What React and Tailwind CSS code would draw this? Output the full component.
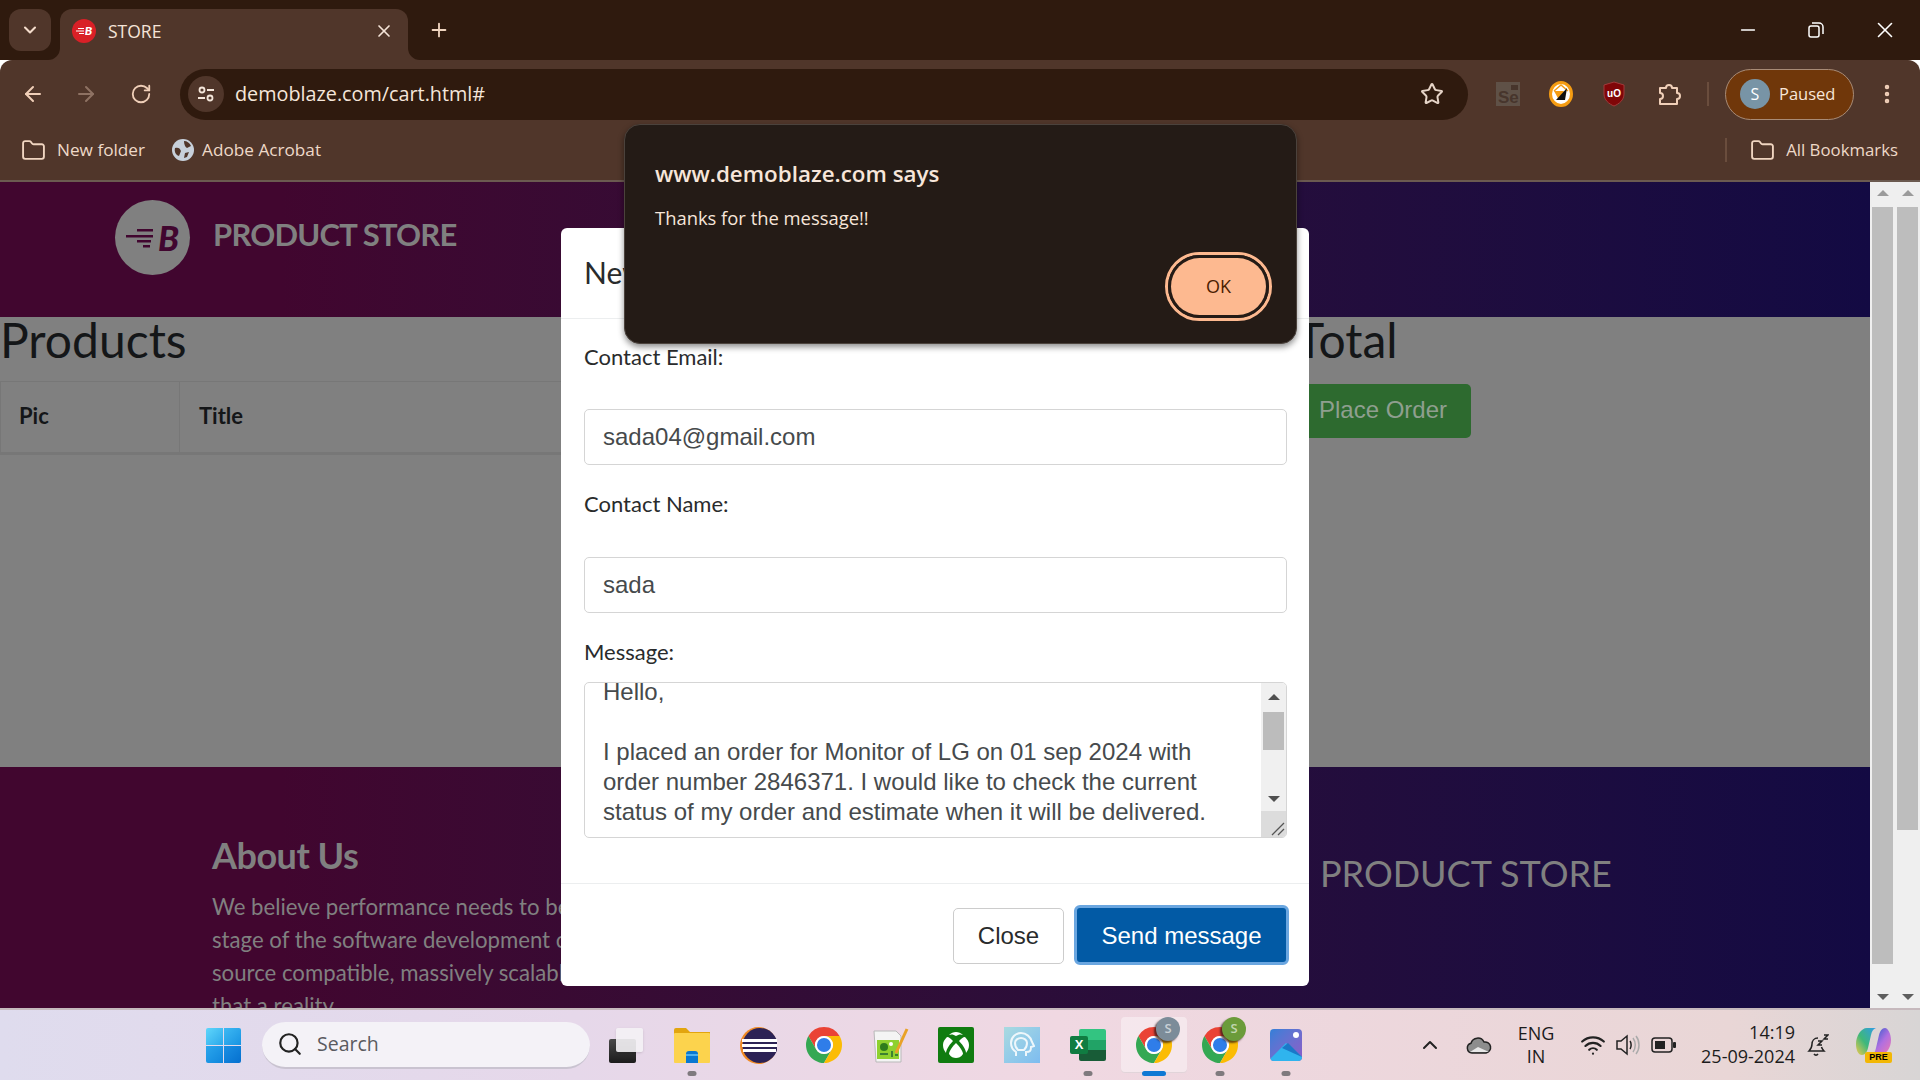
import {
  ArrowLeft,
  ArrowRight,
  RotateCw,
  Star,
  X,
  Plus,
  ChevronDown,
  ChevronUp,
  Minus,
  Search,
  Folder,
  EllipsisVertical,
  Wifi,
} from "lucide-react";

function ChromeIcon({ size = 36 }) {
  return (
    <svg width={size} height={size} viewBox="2 2 44 44">
      <path fill="#EA4335" d="M24 2A22 22 0 0 1 43.05 13H24A11 11 0 0 0 14.47 29.5L4.95 13A22 22 0 0 1 24 2z" />
      <path fill="#34A853" d="M4.95 13L14.47 29.5A11 11 0 0 0 33.53 29.5L24 46A22 22 0 0 1 4.95 13z" />
      <path fill="#FBBC04" d="M43.05 13H24A11 11 0 0 1 33.53 29.5L24 46A22 22 0 0 0 43.05 13z" />
      <circle cx="24" cy="24" r="11" fill="#fff" />
      <circle cx="24" cy="24" r="8.6" fill="#2f7de9" />
    </svg>
  );
}

function WindowsIcon() {
  return (
    <div className="grid h-[35px] w-[35px] grid-cols-2 gap-[1px]">
      <div className="rounded-tl-[2px] bg-gradient-to-br from-[#5fd6fb] to-[#28a8ea]" />
      <div className="rounded-tr-[2px] bg-gradient-to-br from-[#3db9f3] to-[#1793e2]" />
      <div className="rounded-bl-[2px] bg-gradient-to-br from-[#2aa6ec] to-[#0f86dc]" />
      <div className="rounded-br-[2px] bg-gradient-to-br from-[#1a8fe3] to-[#0670cf]" />
    </div>
  );
}

function TaskView() {
  return (
    <div className="relative h-[35px] w-[34px]">
      <div className="absolute bottom-0 left-0 h-[24px] w-[27px] rounded-[2px] bg-gradient-to-b from-[#4a4a4a] to-[#1c1c1c]" />
      <div className="absolute right-0 top-0 h-[24px] w-[27px] rounded-[2px] bg-[#f4f2f5]/90 shadow-sm" />
    </div>
  );
}

function ExplorerIcon() {
  return (
    <svg width="36" height="35" viewBox="0 0 36 35">
      <path fill="#e2a50e" d="M0 2a2 2 0 0 1 2-2h10l4 4h20v8H0z" />
      <rect y="5" width="36" height="30" rx="1" fill="#fcd34d" />
      <path fill="#0a78d1" d="M12 35V26a3 3 0 0 1 3-3h6a3 3 0 0 1 3 3v9z" />
      <rect x="12" y="26" width="12" height="2" fill="#4fb1ee" />
    </svg>
  );
}

function EclipseIcon() {
  return (
    <svg width="37" height="37" viewBox="0 0 37 37">
      <circle cx="18.5" cy="18.5" r="18.5" fill="#f08a24" />
      <circle cx="20" cy="18.5" r="17.5" fill="#2c2255" />
      <rect x="2" y="12" width="35" height="3" fill="#fff" />
      <rect x="2" y="17" width="35" height="3" fill="#fff" />
      <rect x="3" y="22" width="33" height="3" fill="#fff" />
    </svg>
  );
}

function NotepadIcon() {
  return (
    <svg width="37" height="37" viewBox="0 0 37 37">
      <path fill="#f4f4f4" stroke="#b9b9b9" d="M2 4h22l5 5v26H4z" />
      <rect x="5" y="13" width="22" height="19" fill="#8fd12f" />
      <circle cx="12" cy="20" r="4" fill="#2f7d1c" />
      <circle cx="19" cy="17" r="2" fill="#fff" />
      <path stroke="#263" strokeWidth="1.5" d="M8 27h8M20 24v6M23 28h3" fill="none" />
      <path stroke="#e9a227" strokeWidth="3" d="M24 26L35 2" />
    </svg>
  );
}

function XboxIcon() {
  return (
    <div className="flex h-[36px] w-[36px] items-center justify-center rounded-[2px] bg-[#107c10]">
      <svg width="28" height="28" viewBox="0 0 28 28" fill="#fff">
        <path d="M14 5c2-1.500 5-2 7-1-2-1.800-4.500-3-7-3s-5 1.200-7 3c2-1 5-.5 7 1z" />
        <path d="M5 6C2.500 8.500 1 11 1 14c0 3 1 5.500 3 8 0-4 5-10 7-12-2-2-4-4-6-4z" />
        <path d="M23 6c2.500 2.500 4 5 4 8 0 3-1 5.500-3 8 0-4-5-10-7-12 2-2 4-4 6-4z" />
        <path d="M14 12c-3 3-7 8-7 11 2 3 4.500 4 7 4s5-1 7-4c0-3-4-8-7-11z" />
      </svg>
    </div>
  );
}

function LightIcon() {
  return (
    <div className="flex h-[36px] w-[36px] items-center justify-center bg-gradient-to-br from-[#a9dae0] to-[#7dbcf0]">
      <svg width="26" height="28" viewBox="0 0 26 28" fill="none" stroke="#eef7fb" strokeWidth="2">
        <path d="M7 25v-4c-3-2-5-5-5-9C2 6 7 2 12 2s10 4 11 9l2 4-3 1c0 4-1 5-5 5v4" />
        <path d="M9 19c-2-2-3-4-3-7 0-3 3-5 6-5s6 2 6 5c0 3-1 5-3 7z" />
      </svg>
    </div>
  );
}

function ExcelIcon() {
  return (
    <div className="relative h-[32px] w-[36px]">
      <div className="absolute right-0 top-0 grid h-[32px] w-[27px] grid-rows-3 overflow-hidden rounded-[2px]">
        <div className="bg-[#33c481]" />
        <div className="bg-[#21a366]" />
        <div className="bg-[#185c37]" />
      </div>
      <div className="absolute left-0 top-[7px] flex h-[18px] w-[18px] items-center justify-center rounded-[2px] bg-[#107c41] font-['Liberation_Sans',sans-serif] text-[13px] font-bold text-white">
        X
      </div>
    </div>
  );
}

function PhotosIcon() {
  return (
    <div className="relative h-[32px] w-[32px] overflow-hidden rounded-[4px] bg-gradient-to-br from-[#2f7fd8] to-[#8a5cc7]">
      <div className="absolute right-[3px] top-[3px] h-[6px] w-[6px] rounded-full bg-white" />
      <svg className="absolute inset-0" width="32" height="32" viewBox="0 0 32 32">
        <path fill="#2fb4ee" d="M0 30L16 14l16 14v4H0z" />
        <path fill="#1a78c8" d="M12 19l6-5 14 14-9-4z" />
      </svg>
    </div>
  );
}

function CopilotIcon() {
  return (
    <div className="relative h-[36px] w-[36px]">
      <svg className="absolute left-0 top-0" width="35" height="29" viewBox="0 0 35 29">
        <defs>
          <linearGradient id="copLeft" x1="0" y1="1" x2="1" y2="0">
            <stop offset="0" stopColor="#f2c94c" />
            <stop offset="0.45" stopColor="#3fb87a" />
            <stop offset="1" stopColor="#2f9be8" />
          </linearGradient>
          <linearGradient id="copRight" x1="0" y1="0" x2="1" y2="1">
            <stop offset="0" stopColor="#1557c8" />
            <stop offset="0.55" stopColor="#b06fe0" />
            <stop offset="1" stopColor="#f07ab0" />
          </linearGradient>
        </defs>
        <path fill="url(#copLeft)" d="M11 1h9c-3 1-4 3-5 7l-3 13c-1 4-3 7-6 7-4 0-6-5-6-11C0 9 5 1 11 1z" />
        <path fill="url(#copRight)" d="M24 28h-9c3-1 4-3 5-7l3-13c1-4 3-7 6-7 3 0 6 6 6 12 0 8-5 15-11 15z" />
      </svg>
      <div className="absolute bottom-0 right-0 flex h-[11px] w-[27px] items-center justify-center rounded-[2px] bg-[#f2b705] font-['Liberation_Sans',sans-serif] text-[9px] font-bold leading-none text-black">
        PRE
      </div>
    </div>
  );
}

function ProfileChrome({ color }) {
  return (
    <div className="relative h-[36px] w-[36px]">
      <ChromeIcon />
      <div
        className="absolute -right-[8px] -top-[10px] flex h-[24px] w-[24px] items-center justify-center rounded-full font-['Open_Sans',sans-serif] text-[13px] font-semibold text-white/60 shadow-[-2px_2px_2px_rgba(40,20,20,0.7)]"
        style={{ backgroundColor: color }}
      >
        S
      </div>
    </div>
  );
}

function TaskSlot({ children, mark, active }) {
  return (
    <div
      className={`relative flex h-[56px] w-[66px] items-center justify-center ${
        active ? "rounded-[4px] bg-white/40 shadow-[inset_0_-1px_0_rgba(0,0,0,0.08)]" : ""
      }`}
    >
      {children}
      {mark && (
        <div
          className={`absolute bottom-[-3px] left-1/2 h-[5px] -translate-x-1/2 rounded-full ${
            active ? "w-[24px] bg-[#0f78d4]" : "w-[9px] bg-[#7f7a7e]"
          }`}
        />
      )}
    </div>
  );
}

function Taskbar() {
  return (
    <div className="flex h-[72px] items-center border-t-2 border-[#c6b9bd] bg-[linear-gradient(90deg,#dfdcee_0%,#e6d8ea_30%,#f0d8e2_55%,#e9d6d6_90%,#d8d5d5_100%)] pl-[206px] font-['Open_Sans',sans-serif] text-[#1c1c1c]">
      <WindowsIcon />
      <div className="ml-[21px] flex h-[47px] w-[328px] items-center rounded-full border-b-2 border-[#c9c3d0] bg-[#f4f2f7] pl-[15px]">
        <Search size={26} strokeWidth={2} color="#222" />
        <span className="ml-[14px] text-[19.5px] text-[#5a5a5f]">Search</span>
      </div>
      <div className="ml-[3px] flex items-center">
        <TaskSlot><TaskView /></TaskSlot>
        <TaskSlot mark><ExplorerIcon /></TaskSlot>
        <TaskSlot><EclipseIcon /></TaskSlot>
        <TaskSlot><ChromeIcon /></TaskSlot>
        <TaskSlot><NotepadIcon /></TaskSlot>
        <TaskSlot><XboxIcon /></TaskSlot>
        <TaskSlot><LightIcon /></TaskSlot>
        <TaskSlot mark><ExcelIcon /></TaskSlot>
        <TaskSlot mark active><ProfileChrome color="#7c8c99" /></TaskSlot>
        <TaskSlot mark><ProfileChrome color="#6b9b3a" /></TaskSlot>
        <TaskSlot mark><PhotosIcon /></TaskSlot>
      </div>

      {/* tray */}
      <div className="ml-[99px] flex items-center">
        <ChevronUp size={24} strokeWidth={2} color="#222" />
        <svg className="ml-[24px]" width="26" height="18" viewBox="0 0 26 18">
          <path fill="#8d8d8d" stroke="#222" strokeWidth="1.5" d="M6 17a5 5 0 0 1-1-9.800A7 7 0 0 1 18 6a5.500 5.500 0 0 1 2 11z" />
          <path fill="#e8e8e8" d="M4 16l8-5 11 5z" />
        </svg>
        <div className="ml-[11px] flex w-[66px] flex-col items-center text-[18px] leading-[23px]">
          <span>ENG</span>
          <span>IN</span>
        </div>
        <Wifi className="ml-[11px]" size={26} strokeWidth={2} color="#222" />
        <svg className="ml-[9px]" width="26" height="24" viewBox="0 0 26 24" fill="none" stroke="#222" strokeWidth="1.5">
          <path d="M2 8h4l6-5v18l-6-5H2z" />
          <path d="M15 8c1.500 2 1.500 6 0 8" />
          <path stroke="#aaa" d="M18 5c3 4 3 10 0 14M21 3c4 5 4 13 0 18" />
        </svg>
        <svg className="ml-[10px]" width="26" height="18" viewBox="0 0 26 18">
          <rect x="1" y="2" width="20" height="14" rx="3" fill="none" stroke="#222" strokeWidth="1.500" />
          <rect x="4" y="5" width="10" height="8" fill="#222" />
          <rect x="22" y="6" width="3" height="6" rx="1" fill="#222" />
        </svg>
        <div className="ml-[15px] flex w-[103px] flex-col items-end pb-[3px] text-[18px] leading-[24px]">
          <span>14:19</span>
          <span className="whitespace-nowrap">25-09-2024</span>
        </div>
        <svg className="ml-[12px]" width="22" height="24" viewBox="0 0 22 24" fill="none" stroke="#222" strokeWidth="1.500">
          <path d="M11 5C7 5 5 8 5 11c0 3-1 5-3 7h15c-1-1-2-2-2.500-4" />
          <path d="M7 21c1 1.500 3 1.500 4 0" />
          <path d="M11 8h4l-4 4h4M17 2h4l-4 4h4" />
        </svg>
        <div className="ml-[27px]">
          <CopilotIcon />
        </div>
      </div>
    </div>
  );
}

function BrowserChrome() {
  return (
    <>
      {/* tab strip */}
      <div className="flex h-[60px] items-end bg-[#2f1a0e] font-['Open_Sans',sans-serif]">
        <div className="mb-[9px] ml-[9px] flex h-[42px] w-[42px] items-center justify-center rounded-[12px] bg-[#50362a]">
          <ChevronDown size={20} strokeWidth={2.5} color="#f4dccb" />
        </div>
        <div className="relative ml-[9px] flex h-[51px] w-[348px] items-center rounded-t-[12px] bg-[#50362a] pb-[7px] pl-[12px]">
          {/* flared tab corners */}
          <svg className="absolute -left-[12px] bottom-0" width="12" height="12" viewBox="0 0 12 12" fill="#50362a">
            <path d="M12 0v12H0A12 12 0 0 0 12 0z" />
          </svg>
          <svg className="absolute -right-[12px] bottom-0" width="12" height="12" viewBox="0 0 12 12" fill="#50362a">
            <path d="M0 0v12h12A12 12 0 0 1 0 0z" />
          </svg>
          <div className="flex h-[24px] w-[24px] items-center justify-center rounded-full bg-[#d92027] font-['Lato',sans-serif] text-[12px] font-black italic text-white">
            <svg className="mr-[1px]" width="8" height="6" viewBox="0 0 8 6" fill="#fff">
              <rect x="2" y="0" width="6" height="1" />
              <rect x="0" y="2.500" width="8" height="1" />
              <rect x="3" y="5" width="5" height="1" />
            </svg>
            B
          </div>
          <span className="ml-[12px] text-[17.5px] text-[#f5e4d8]">STORE</span>
          <X className="ml-auto mr-[14px]" size={20} strokeWidth={2} color="#f5e4d8" />
        </div>
        <Plus className="mb-[19px] ml-[20px]" size={22} strokeWidth={2} color="#f0d5c0" />
        <div className="ml-auto flex h-full items-center">
          <Minus size={22} strokeWidth={1.5} color="#fff" />
          <svg className="ml-[49px]" width="16" height="16" viewBox="0 0 16 16" fill="none" stroke="#fff" strokeWidth="1.500">
            <rect x="1" y="4" width="10" height="11" rx="2" />
            <path d="M4 1h7a4 4 0 0 1 4 4v7" />
          </svg>
          <X className="ml-[48px] mr-[22px]" size={26} strokeWidth={1.5} color="#fff" />
        </div>
      </div>

      {/* toolbar */}
      <div className="flex h-[68px] items-center rounded-t-[12px] bg-[#50362a] pl-[21px] font-['Open_Sans',sans-serif]">
        <ArrowLeft size={24} strokeWidth={2} color="#f0cfb8" />
        <ArrowRight className="ml-[29px]" size={24} strokeWidth={2} color="#8e7263" />
        <RotateCw className="ml-[32px]" size={22} strokeWidth={2} color="#f0cfb8" />
        <div className="ml-[28px] flex h-[51px] w-[1288px] items-center rounded-full bg-[#2f1a0e] pl-[8px]">
          <div className="flex h-[36px] w-[36px] items-center justify-center rounded-full bg-[#50362a]">
            <svg width="20" height="20" viewBox="0 0 20 20" fill="none" stroke="#f4e6da" strokeWidth="1.800">
              <circle cx="6" cy="6" r="2.500" />
              <path d="M11 6h7M2 14h7" />
              <circle cx="14" cy="14" r="2.500" />
            </svg>
          </div>
          <span className="ml-[11px] text-[19.8px] text-[#f5e6da]">demoblaze.com/cart.html#</span>
          <Star className="ml-auto mr-[24px]" size={24} strokeWidth={2} color="#e6d4c7" />
        </div>

        {/* extensions */}
        <div className="relative ml-[28px] flex h-[24px] w-[24px] flex-col items-start justify-end bg-[#5f5147] pl-[2px] font-['Liberation_Sans',sans-serif] text-[17px] font-bold leading-[17px] text-[#47352c]">
          <div className="absolute right-[2px] top-[3px] h-[5px] w-[7px] bg-[#47352c]" />
          Se
        </div>
        <svg className="ml-[29px]" width="24" height="26" viewBox="0 0 24 26">
          <ellipse cx="12" cy="13" rx="10.500" ry="11.500" fill="#fff" stroke="#f59c12" strokeWidth="3" />
          <path d="M5 10l7-6 7 6" fill="none" stroke="#f59c12" strokeWidth="1.500" />
          <path d="M5 10h10l-5 9z" fill="#f59c12" />
          <path d="M18 7L7 19h9z" fill="#111" />
        </svg>
        <div className="relative ml-[30px] flex h-[26px] w-[22px] items-center justify-center font-['Liberation_Sans',sans-serif] text-[10px] font-bold text-white">
          <svg className="absolute inset-0" width="22" height="26" viewBox="0 0 22 26">
            <path fill="#800608" stroke="#a03a3a" strokeWidth="1" d="M11 1l10 3v9c0 6-5 10-10 12C6 23 1 19 1 13V4z" />
          </svg>
          <span className="relative -mt-[2px]">uO</span>
        </div>
        <svg className="ml-[32px]" width="26" height="26" viewBox="0 0 26 26" fill="none" stroke="#f0cfb8" strokeWidth="2" strokeLinejoin="round">
          <path d="M3 7h6a3 3 0 0 1 6 0h5v5a3 3 0 0 1 0 6v5H3v-5a3 3 0 0 0 0-6z" />
        </svg>
        <div className="ml-[24px] h-[24px] w-[2px] bg-[#6a4d3d]" />
        <div className="ml-[16px] flex h-[51px] w-[129px] items-center rounded-full border border-[#a88b76] bg-[#70370a] pl-[14px]">
          <div className="flex h-[30px] w-[30px] items-center justify-center rounded-full bg-[#7894a6] text-[16px] text-white">
            S
          </div>
          <span className="ml-[9px] text-[16.5px] text-[#f8e6d8]">Paused</span>
        </div>
        <EllipsisVertical className="ml-[21px]" size={24} strokeWidth={2.5} color="#f0cfb8" />
      </div>

      {/* bookmarks */}
      <div className="flex h-[54px] items-center border-b-2 border-[#6b5a50] bg-[#50362a] pb-[8px] pl-[21px] font-['Open_Sans',sans-serif] text-[17.2px] text-[#eed9c8]">
        <Folder size={25} strokeWidth={1.8} color="#f0d5c0" />
        <span className="ml-[11px]">New folder</span>
        <svg className="ml-[27px]" width="22" height="22" viewBox="0 0 22 22">
          <circle cx="11" cy="11" r="11" fill="#c7d0da" />
          <path fill="#50362a" d="M3 9c3-1 5 0 6 3l-2 5c-3-1-5-4-4-8zM12 2c3 0 6 2 7 5l-4 2c-2-1-3-4-3-7zM13 14l4-1-2 5-3 1z" />
        </svg>
        <span className="ml-[8px]">Adobe Acrobat</span>
        <div className="ml-auto h-[24px] w-[2px] bg-[#6a4d3d]" />
        <Folder className="ml-[23px]" size={25} strokeWidth={1.8} color="#f0d5c0" />
        <span className="ml-[11px] mr-[22px] text-[16.8px]">All Bookmarks</span>
      </div>
    </>
  );
}

function PageBehind() {
  return (
    <div className="flex min-w-0 flex-1 flex-col bg-[#808080] font-['Lato',sans-serif]">
      <div className="flex h-[135px] bg-gradient-to-r from-[#41062f] from-15% to-[#130a43] pl-[115px] pt-[18px]">
        <div className="flex h-[75px] w-[75px] items-center justify-center rounded-full bg-[#808080]">
          <svg className="mr-[5px]" width="27" height="20" viewBox="0 0 27 20" fill="#41062f">
            <rect x="11" y="1" width="16" height="2.500" />
            <rect x="0" y="7" width="27" height="2.500" />
            <rect x="11" y="12" width="14" height="2.500" />
            <rect x="17" y="17" width="7" height="2.500" />
          </svg>
          <span className="text-[34px] font-black italic leading-none text-[#41062f]">B</span>
        </div>
        <span className="ml-[23px] mt-[14px] text-[31px] font-bold leading-[40px] tracking-[-0.8px] text-[#808080]">
          PRODUCT STORE
        </span>
      </div>

      <div className="flex h-[450px]">
        <div className="w-[1296px] shrink-0">
          <h2 className="h-[64px] text-[48px] leading-[45px] text-[#141618]">Products</h2>
          <div className="flex h-[74px] items-center border-x border-y border-[#777] border-b-[3px] text-[22px] font-bold text-[#141618]">
            <div className="flex h-full w-[179px] items-center border-r border-[#777] pb-[3px] pl-[18px]">Pic</div>
            <div className="pb-[3px] pl-[19px]">Title</div>
          </div>
        </div>
        <div>
          <h2 className="h-[67px] text-[48px] leading-[45px] text-[#141618]">Total</h2>
          <div className="flex h-[54px] w-[175px] items-center justify-end rounded-r-[5px] bg-[#2d6a2f] pb-[2px] pr-[24px] font-['Liberation_Sans',sans-serif] text-[24px] whitespace-nowrap text-[#8f9f8f]">
            Place Order
          </div>
        </div>
      </div>

      <div className="flex flex-1 overflow-hidden bg-gradient-to-r from-[#41062f] from-15% to-[#130a43]">
        <div className="w-[1320px] shrink-0 pl-[212px] pt-[65px] text-[#808080]">
          <h3 className="text-[36px] font-bold leading-[46px] tracking-[-0.5px]">About Us</h3>
          <p className="mt-[12px] whitespace-nowrap text-[22.2px] leading-[33px]">
            We believe performance needs to be validated at every
            <br />
            stage of the software development cycle and our open
            <br />
            source compatible, massively scalable platform makes
            <br />
            that a reality.
          </p>
        </div>
        <div className="pt-[84px] text-[36px] leading-[44px] whitespace-nowrap text-[#808080]">PRODUCT STORE</div>
      </div>
    </div>
  );
}

function PageScrollbars() {
  return (
    <div className="flex w-[50px] shrink-0 gap-[4px] bg-[#efefef] px-[2px] pt-[8px]">
      {[757, 623].map((h, i) => (
        <div key={i} className="flex w-[21px] flex-col items-center">
          <div className="h-0 w-0 border-x-[6px] border-b-[6px] border-x-transparent border-b-[#9b9b9b]" />
          <div className="mt-[11px] w-full bg-[#bdbdbd]" style={{ height: h }} />
          <div className="mt-auto mb-[8px] h-0 w-0 border-x-[6px] border-t-[6px] border-x-transparent border-t-[#5e5e5e]" />
        </div>
      ))}
    </div>
  );
}

function Field({ label, value, gap }) {
  return (
    <>
      <label className={`block h-[34px] font-['Lato',sans-serif] text-[22px] leading-[34px] text-[#292b2c] ${gap}`}>{label}</label>
      <div className="mt-[35px] flex h-[56px] items-center rounded-[5px] border border-[#d5d5d5] pl-[18px] text-[24px] text-[#464a4c]">
        {value}
      </div>
    </>
  );
}

function MessageModal() {
  return (
    <div className="absolute left-[561px] top-[228px] h-[758px] w-[748px] rounded-[6px] bg-white font-['Liberation_Sans',sans-serif]">
      <div className="h-[91px] border-b border-[#eceeef] pl-[23px] pt-[25px] font-['Lato',sans-serif] text-[30px] leading-[38px] text-[#292b2c]">
        New message
      </div>
      <div className="h-[565px] border-b border-[#eceeef] pl-[23px] pr-[22px] pt-[21px]">
        <Field label="Contact Email:" value="sada04@gmail.com" />
        <Field label="Contact Name:" value="sada" gap="mt-[22px] mb-[36px]" />
        <label className="mt-[22px] block h-[34px] font-['Lato',sans-serif] text-[22px] leading-[34px] text-[#292b2c]">Message:</label>
        <div className="mt-[13px] flex h-[156px] overflow-hidden rounded-[5px] border border-[#d5d5d5]">
          <div className="-mt-[6px] flex-1 whitespace-nowrap pl-[18px] text-[24px] leading-[30px] text-[#464a4c]">
            <div>Hello,</div>
            <div className="h-[30px]" />
            <div>I placed an order for Monitor of LG on 01 sep 2024 with</div>
            <div>order number 2846371. I would like to check the current</div>
            <div>status of my order and estimate when it will be delivered.</div>
          </div>
          <div className="flex w-[25px] shrink-0 flex-col items-center bg-[#f0f0f0] pt-[11px]">
            <div className="h-0 w-0 border-x-[6px] border-b-[6px] border-x-transparent border-b-[#505050]" />
            <div className="mt-[12px] h-[38px] w-[21px] bg-[#bcbcbc]" />
            <div className="mt-[46px] h-0 w-0 border-x-[6px] border-t-[6px] border-x-transparent border-t-[#505050]" />
            <div className="mt-auto flex h-[26px] w-full items-end justify-end bg-[#dcdcdc] pb-[1px] pr-[1px]">
              <svg width="14" height="14" viewBox="0 0 14 14" stroke="#555" strokeWidth="1.300">
                <path d="M1 13L13 1M7 13l6-6" />
              </svg>
            </div>
          </div>
        </div>
      </div>
      <div className="flex justify-end gap-[10px] pr-[20px] pt-[21px]">
        <button className="mt-[3px] h-[56px] w-[111px] rounded-[5px] border border-[#ccc] bg-white text-[24px] text-[#292b2c]">Close</button>
        <button className="h-[60px] w-[215px] rounded-[6px] border-[3px] border-[#6aa6e0] bg-[#025aa5] pt-[1px] text-[24px] text-white">Send message</button>
      </div>
    </div>
  );
}

function AlertBox() {
  return (
    <div className="absolute left-[624px] top-[124px] h-[220px] w-[673px] rounded-[16px] border border-[#4b423c] bg-[#241b16] pl-[30px] pt-[34px] font-['Open_Sans',sans-serif] text-[#f7e6da] shadow-[0_3px_6px_rgba(0,0,0,0.45)]">
      <div className="text-[22.4px] font-semibold leading-[30px]">www.demoblaze.com says</div>
      <div className="mt-[17px] text-[18.4px] leading-[24px]">Thanks for the message!!</div>
      <div className="absolute right-[24px] top-[127px] flex h-[69px] w-[107px] items-center justify-center rounded-full border-[3px] border-[#fdb990]">
        <div className="flex h-[57px] w-[95px] items-center justify-center rounded-full bg-[#fdb990] text-[18px] font-medium text-[#4a2000] shadow-[0_0_0_3px_#241b16]">
          OK
        </div>
      </div>
    </div>
  );
}

export default function App() {
  return (
    <div className="relative flex h-screen w-full flex-col overflow-hidden">
      <BrowserChrome />
      <div className="relative flex min-h-0 flex-1">
        <PageBehind />
        <PageScrollbars />
      </div>
      <Taskbar />

      <MessageModal />
      <AlertBox />
    </div>
  );
}
